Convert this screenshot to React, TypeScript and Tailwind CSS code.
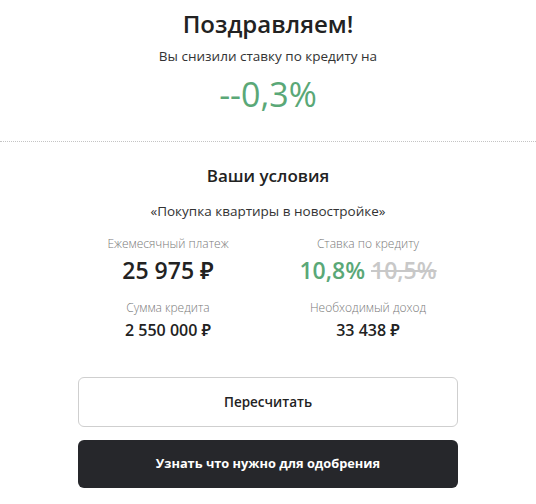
import React from "react";

const font = { fontFamily: '"Open Sans", "Noto Sans", sans-serif' };

const App: React.FC = () => {
  return (
    <div className="w-[536px] h-[504px] bg-white text-[#222] overflow-hidden" style={font}>
      {/* Header */}
      <div className="flex flex-col items-center pt-[6px] h-[141px]">
        <h1 className="text-[24px] leading-[36px] font-semibold text-[#222]">Поздравляем!</h1>
        <p className="mt-[4px] text-[13.5px] leading-[20px] text-[#333]">Вы снизили ставку по кредиту на</p>
        <div className="mt-[6px] text-[34px] leading-[44px] font-medium text-[#5aa877]">--0,3%</div>
      </div>
      <div className="border-t border-dotted border-[#c4c4c4]" />

      {/* Conditions */}
      <div className="flex flex-col items-center pt-[21px]">
        <h2 className="text-[17px] leading-[26px] font-semibold text-[#222]">Ваши условия</h2>
        <p className="mt-[12px] text-[13.5px] leading-[20px] text-[#333]">«Покупка квартиры в новостройке»</p>

        <div className="mt-[14px] grid grid-cols-2 w-[400px] gap-y-[12px]">
          <div className="flex flex-col items-center">
            <span className="text-[12px] leading-[18px] font-light text-[#7a7a7a]">Ежемесячный платеж</span>
            <span className="text-[23px] leading-[34px] font-semibold text-[#222]">25 975 ₽</span>
          </div>
          <div className="flex flex-col items-center">
            <span className="text-[12px] leading-[18px] font-light text-[#7a7a7a]">Ставка по кредиту</span>
            <span className="text-[23px] leading-[34px] font-semibold">
              <span className="text-[#5aa877]">10,8%</span>{" "}
              <span className="text-[#c8c8c8] line-through">10,5%</span>
            </span>
          </div>
          <div className="flex flex-col items-center">
            <span className="text-[12px] leading-[18px] font-light text-[#7a7a7a]">Сумма кредита</span>
            <span className="text-[16px] leading-[26px] font-semibold text-[#222]">2 550 000 ₽</span>
          </div>
          <div className="flex flex-col items-center">
            <span className="text-[12px] leading-[18px] font-light text-[#7a7a7a]">Необходимый доход</span>
            <span className="text-[16px] leading-[26px] font-semibold text-[#222]">33 438 ₽</span>
          </div>
        </div>

        {/* Buttons */}
        <div className="mt-[34px] w-[380px] flex flex-col gap-[13px]">
          <button className="h-[50px] rounded-[6px] border border-[#cfcfcf] bg-white text-[13.5px] font-semibold text-[#222]">
            Пересчитать
          </button>
          <button className="h-[48px] rounded-[6px] bg-[#26272b] text-[12.8px] font-bold text-white">
            Узнать что нужно для одобрения
          </button>
        </div>
      </div>
    </div>
  );
};

export default App;
